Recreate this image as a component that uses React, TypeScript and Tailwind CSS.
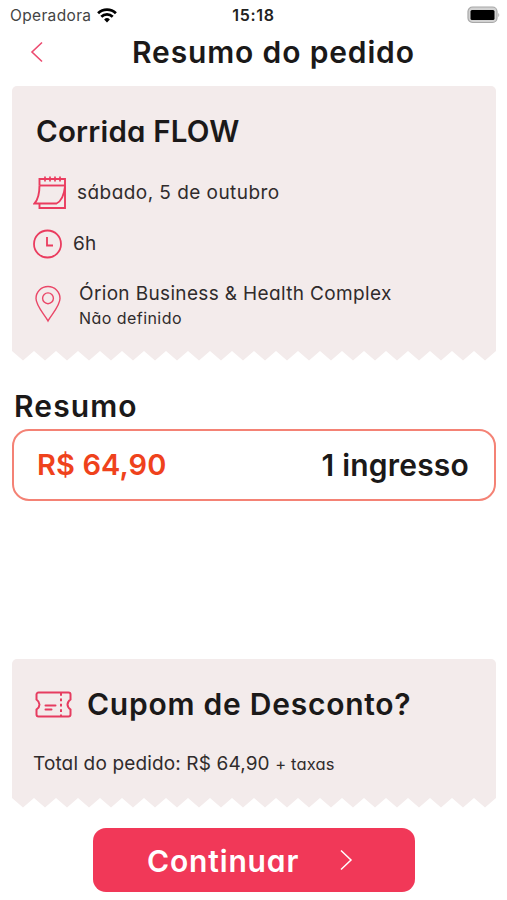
import type { ReactNode } from 'react';

const TEETH = 22;

function TornEdge() {
  const points = ['0,0'];
  for (let i = 0; i < TEETH; i++) {
    points.push(`${i * 22 + 11},9.5`, `${(i + 1) * 22},0`);
  }
  return (
    <svg viewBox="0 0 484 10" className="block h-[10px] w-full fill-[#f3ebeb]">
      <polygon points={points.join(' ')} />
    </svg>
  );
}

function Ticket({ className, children }: { className: string; children: ReactNode }) {
  return (
    <section className="mx-3 w-[484px]">
      <div className={`rounded-t-[5px] bg-[#f3ebeb] ${className}`}>{children}</div>
      <TornEdge />
    </section>
  );
}

function StatusBar() {
  return (
    <div className="grid h-[30px] grid-cols-3 items-center pl-[10px] pr-[7px] text-[#222]">
      <div className="flex items-center gap-[6px]">
        <span className="pt-px text-[15.5px] tracking-[0.35px] text-[#444] [font-feature-settings:normal]">Operadora</span>
        <svg viewBox="0 0 20 15" className="h-[15px] w-5" fill="none" stroke="#000" strokeWidth="2.8">
          <path d="M1.1 5.3a12.8 12.8 0 0 1 17.8 0" />
          <path d="M4.3 8.7a8.2 8.2 0 0 1 11.4 0" />
          <path d="M10 14.5l-2.9-3a4.2 4.2 0 0 1 5.8 0z" fill="#000" stroke="none" />
        </svg>
      </div>
      <span className="-ml-[3px] text-center text-[16px] font-semibold leading-5 tracking-[0.7px]">15:18</span>
      <svg viewBox="0 0 33 18" className="h-[18px] w-[33px] justify-self-end">
        <rect x="1" y="1" width="29" height="15.5" rx="4.5" fill="#d2d2d2" stroke="#a8a8a8" strokeWidth="1.2" />
        <rect x="3.5" y="4" width="24" height="10" rx="1.5" fill="#000" />
        <path d="M31.3 7v4c1.3-.5 1.3-3.5 0-4z" fill="#aaa" />
      </svg>
    </div>
  );
}

function CalendarIcon() {
  return (
    <svg viewBox="0 0 34 34" className="h-[34px] w-[34px]" fill="none" stroke="#ea3c5f" strokeWidth="1.9">
      <path d="M6.5 9.5V3H32v29H6.5v-4" />
      <path d="M6.5 9.5H32" />
      <path d="M6.5 9.5c0 8-1.5 14-5 18h22c4-2 7.5-8 8.5-17" />
      <path d="M12 .5v5M17 .5v5M22 .5v5M27 .5v5" strokeWidth="1.7" />
    </svg>
  );
}

function ClockIcon() {
  return (
    <svg viewBox="0 0 30 30" className="h-[30px] w-[30px]" fill="none" stroke="#ea3c5f" strokeWidth="1.8">
      <circle cx="14.5" cy="15" r="13.5" />
      <path d="M14 8v8.5h6" />
    </svg>
  );
}

function PinIcon() {
  return (
    <svg viewBox="0 0 26 38" className="h-[38px] w-[26px]" fill="none" stroke="#ea4768" strokeWidth="1.4">
      <path d="M13 36C10 30 1 21 1 13.5a12 12 0 0 1 24 0C25 21 16 30 13 36z" />
      <circle cx="13" cy="13.3" r="5.4" />
    </svg>
  );
}

function CouponIcon() {
  return (
    <svg viewBox="0 0 37 27" className="h-[27px] w-[37px]" fill="none" stroke="#e63c60" strokeWidth="2">
      <path d="M3.5 1.5h30a2 2 0 0 1 2 2v5c-4 3-4 7 0 10v5a2 2 0 0 1-2 2h-30a2 2 0 0 1-2-2v-5c4-3 4-7 0-10v-5a2 2 0 0 1 2-2z" />
      <path d="M26 2v23" strokeDasharray="2.8 2.6" />
      <path d="M10.5 14.5h10M10.5 18.5h6" strokeLinecap="round" />
    </svg>
  );
}

export default function App() {
  return (
    <main className="flex h-[900px] w-[507px] flex-col overflow-hidden bg-white font-['Inter',sans-serif] text-[#1b1919] [font-feature-settings:'cv11']">
      <StatusBar />
      <header className="flex h-[56px] items-start pl-[30px]">
        <svg viewBox="0 0 14 22" className="mt-[11px] h-[22px] w-[14px]" fill="none" stroke="#ec4b70" strokeWidth="1.6">
          <path d="M12 1.5L2 11l10 9.5" />
        </svg>
        <h1 className="ml-[88px] mt-[4px] whitespace-nowrap text-[30px] font-semibold leading-9 tracking-[0.85px]">
          Resumo do pedido
        </h1>
      </header>

      <Ticket className="h-[265px] pl-[21px] pt-[27px] text-[#302b2c]">
        <h2 className="ml-[3px] text-[29.5px] font-semibold leading-9 tracking-[0.2px] text-[#1b1919]">Corrida FLOW</h2>
        <div className="mt-[27px] flex h-[34px] items-center gap-[10px]">
          <CalendarIcon />
          <span className="text-[19px] leading-7 tracking-[0.45px]">sábado, 5 de outubro</span>
        </div>
        <div className="mt-[19px] flex h-[30px] items-center gap-[10px]">
          <ClockIcon />
          <span className="text-[19px] leading-7 tracking-[0.3px]">6h</span>
        </div>
        <div className="ml-[2px] mt-[22px] flex items-start gap-[18px]">
          <div className="mt-[4px]"><PinIcon /></div>
          <div>
            <p className="text-[19px] leading-[26px] tracking-[0.35px]">Órion Business &amp; Health Complex</p>
            <p className="-mt-px text-[16px] leading-6 tracking-[0.45px]">Não definido</p>
          </div>
        </div>
      </Ticket>

      <section className="ml-3 mt-[27px] w-[484px]">
        <h2 className="ml-[2px] text-[30px] font-semibold leading-9 tracking-[1.1px]">Resumo</h2>
        <div className="mt-[5px] flex h-[72px] items-center justify-between rounded-[17px] border-2 border-[#f48275] pl-[23px] pr-[25px] text-[30px] font-semibold">
          <span className="text-[29px] tracking-[0.1px] text-[#ef421c]">R$ 64,90</span>
          <span className="tracking-[0.2px]">1 ingresso</span>
        </div>
      </section>

      <div className="flex-1" />

      <Ticket className="h-[139px] pl-[23px] pt-[27px]">
        <div className="flex items-center gap-[15px]">
          <CouponIcon />
          <h2 className="text-[30px] font-semibold leading-9 tracking-[0.75px]">Cupom de Desconto?</h2>
        </div>
        <p className="-ml-[2px] mt-[28px] text-[19px] leading-7 tracking-[0.14px] text-[#302b2c]">
          Total do pedido: R$ 64,90 <span className="text-[16.5px]">+ taxas</span>
        </p>
      </Ticket>

      <button className="mb-[8px] ml-[93px] mt-[20px] flex h-[64px] w-[322px] items-center rounded-[13px] bg-[#f13858] pl-[54px] text-white">
        <span className="pt-[2px] text-[30px] font-semibold tracking-[0.85px]">Continuar</span>
        <svg viewBox="0 0 14 22" className="ml-[40px] h-[22px] w-[14px]" fill="none" stroke="#fff" strokeWidth="1.5">
          <path d="M2 1.5L12 11 2 20.5" />
        </svg>
      </button>
    </main>
  );
}
